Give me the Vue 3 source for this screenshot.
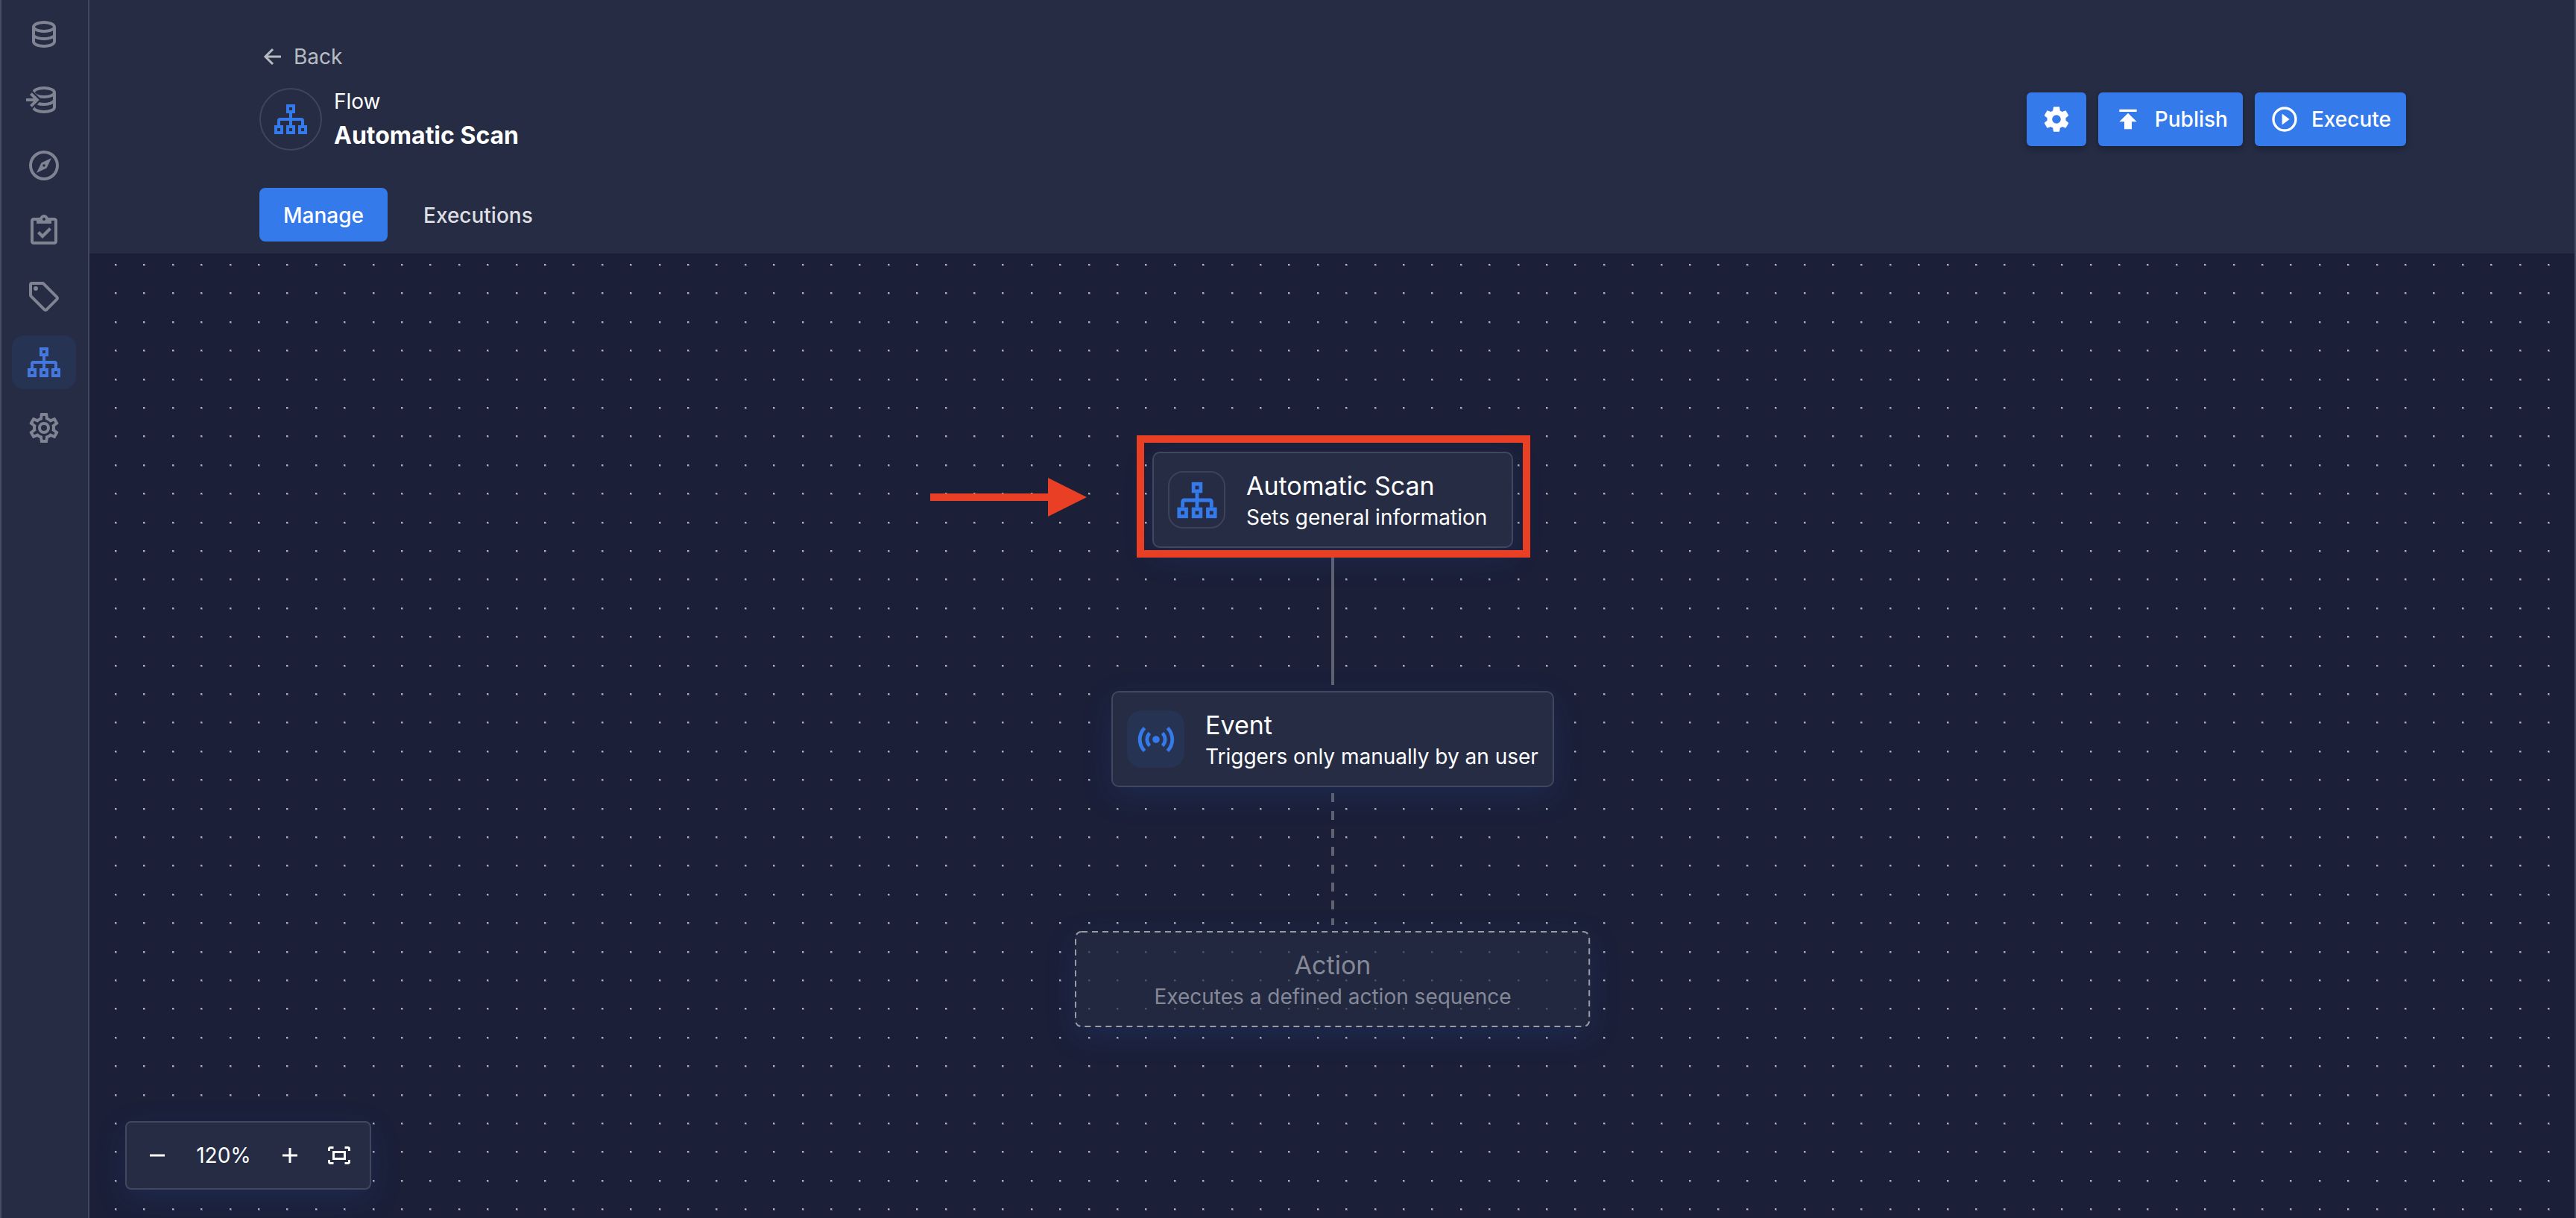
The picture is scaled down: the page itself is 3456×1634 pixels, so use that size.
<script setup>
const cogOutline =
  'M12,8A4,4 0 0,1 16,12A4,4 0 0,1 12,16A4,4 0 0,1 8,12A4,4 0 0,1 12,8M12,10A2,2 0 0,0 10,12A2,2 0 0,0 12,14A2,2 0 0,0 14,12A2,2 0 0,0 12,10M10,22C9.75,22 9.54,21.82 9.5,21.58L9.13,18.93C8.5,18.68 7.96,18.34 7.44,17.94L4.95,18.95C4.73,19.03 4.46,18.95 4.34,18.73L2.34,15.27C2.21,15.05 2.27,14.78 2.46,14.63L4.57,12.97L4.5,12L4.57,11L2.46,9.37C2.27,9.22 2.21,8.95 2.34,8.73L4.34,5.27C4.46,5.05 4.73,4.96 4.95,5.05L7.44,6.05C7.96,5.66 8.5,5.32 9.13,5.07L9.5,2.42C9.54,2.18 9.75,2 10,2H14C14.25,2 14.46,2.18 14.5,2.42L14.87,5.07C15.5,5.32 16.04,5.66 16.56,6.05L19.05,5.05C19.27,4.96 19.54,5.05 19.66,5.27L21.66,8.73C21.79,8.95 21.73,9.22 21.54,9.37L19.43,11L19.5,12L19.43,13L21.54,14.63C21.73,14.78 21.79,15.05 21.66,15.27L19.66,18.73C19.54,18.95 19.27,19.04 19.05,18.95L16.56,17.95C16.04,18.34 15.5,18.68 14.87,18.93L14.5,21.58C14.46,21.82 14.25,22 14,22H10M11.25,4L10.88,6.61C9.68,6.86 8.62,7.5 7.85,8.39L5.44,7.35L4.69,8.65L6.8,10.2C6.4,11.37 6.4,12.64 6.8,13.8L4.68,15.36L5.43,16.66L7.86,15.62C8.63,16.5 9.68,17.14 10.87,17.38L11.24,20H12.76L13.13,17.39C14.32,17.14 15.37,16.5 16.14,15.62L18.57,16.66L19.32,15.36L17.2,13.81C17.6,12.64 17.6,11.37 17.2,10.2L19.31,8.65L18.56,7.35L16.15,8.39C15.38,7.5 14.32,6.86 13.12,6.62L12.75,4H11.25Z'

const navItems = [
  {
    id: 'data',
    label: 'Data',
    path: 'M12 3C7.58 3 4 4.79 4 7V17C4 19.21 7.59 21 12 21S20 19.21 20 17V7C20 4.79 16.42 3 12 3M18 17C18 17.5 15.87 19 12 19S6 17.5 6 17V14.77C7.61 15.55 9.72 16 12 16S16.39 15.55 18 14.77V17M18 12.45C16.7 13.4 14.42 14 12 14C9.58 14 7.3 13.4 6 12.45V9.64C7.47 10.47 9.61 11 12 11C14.39 11 16.53 10.47 18 9.64V12.45M12 9C8.13 9 6 7.5 6 7S8.13 5 12 5C15.87 5 18 6.5 18 7S15.87 9 12 9Z',
  },
  { id: 'import', label: 'Import' },
  {
    id: 'explore',
    label: 'Explore',
    path: 'M7,17L10.2,10.2L17,7L13.8,13.8L7,17M12,11.1A0.9,0.9 0 0,0 11.1,12A0.9,0.9 0 0,0 12,12.9A0.9,0.9 0 0,0 12.9,12A0.9,0.9 0 0,0 12,11.1M12,2A10,10 0 0,1 22,12A10,10 0 0,1 12,22A10,10 0 0,1 2,12A10,10 0 0,1 12,2M12,4A8,8 0 0,0 4,12A8,8 0 0,0 12,20A8,8 0 0,0 20,12A8,8 0 0,0 12,4Z',
  },
  {
    id: 'tasks',
    label: 'Tasks',
    path: 'M19 3H14.82C14.4 1.84 13.3 1 12 1S9.6 1.84 9.18 3H5C3.9 3 3 3.9 3 5V19C3 20.1 3.9 21 5 21H19C20.1 21 21 20.1 21 19V5C21 3.9 20.1 3 19 3M12 3C12.55 3 13 3.45 13 4S12.55 5 12 5 11 4.55 11 4 11.45 3 12 3M7 7H17V5H19V19H5V5H7V7M7.5 13.5L9 12L11 14L15.5 9.5L17 11L11 17L7.5 13.5Z',
  },
  {
    id: 'tags',
    label: 'Tags',
    path: 'M21.41 11.58L12.41 2.58A2 2 0 0 0 11 2H4A2 2 0 0 0 2 4V11A2 2 0 0 0 2.59 12.42L11.59 21.42A2 2 0 0 0 13 22A2 2 0 0 0 14.41 21.41L21.41 14.41A2 2 0 0 0 22 13A2 2 0 0 0 21.41 11.58M13 20L4 11V4H11L20 13M6.5 5A1.5 1.5 0 1 1 5 6.5A1.5 1.5 0 0 1 6.5 5Z',
  },
  { id: 'flows', label: 'Flows', active: true },
  { id: 'settings', label: 'Settings', path: cogOutline },
]

// Five grid steps of the 120% zoom level fill one tile.
const steps = [0, 38, 77, 115, 154]
const dots = steps.flatMap((y) => steps.map((x) => ({ x, y })))
</script>

<template>
  <div class="app">
    <svg class="sprite" aria-hidden="true">
      <symbol id="sitemap" viewBox="0 0 24 24">
        <g fill="none" stroke="currentColor" stroke-width="2">
          <rect x="10" y="3" width="4" height="4" />
          <rect x="2" y="17" width="4" height="4" />
          <rect x="10" y="17" width="4" height="4" />
          <rect x="18" y="17" width="4" height="4" />
          <path d="M12 8V16M4 16V13Q4 12 5 12H19Q20 12 20 13V16" />
        </g>
      </symbol>
    </svg>

    <nav class="sidebar" aria-label="Main">
      <a
        v-for="item in navItems"
        :key="item.id"
        href="#"
        class="nav-item"
        :class="{ active: item.active }"
        :aria-label="item.label"
      >
        <svg v-if="item.path" class="icon" viewBox="0 0 24 24"><path :d="item.path" fill="currentColor" /></svg>
        <svg v-else-if="item.id === 'flows'" class="icon"><use href="#sitemap" /></svg>
        <svg v-else class="icon" viewBox="0 0 24 24">
          <mask id="import-cut">
            <rect width="24" height="24" fill="#fff" />
            <path d="M3.6 5.1L10.5 12L3.6 18.9H0V5.1Z" fill="#000" />
          </mask>
          <g fill="none" stroke="currentColor" stroke-width="2" mask="url(#import-cut)">
            <ellipse cx="12" cy="7" rx="7" ry="3" />
            <path d="M5 7V17C5 18.6 8 20 12 20S19 18.6 19 17V7M5 12C6 14 9 15 12 15S18 14 19 12.3" />
          </g>
          <path d="M3.92 7.08L2.5 8.5L5 11H0V13H5L2.5 15.5L3.92 16.92L8.84 12Z" fill="currentColor" />
        </svg>
      </a>
    </nav>

    <div class="main">
      <header class="header">
        <div class="header-inner">
          <a href="#" class="back">
            <svg class="icon-small" viewBox="0 0 36 36">
              <path d="M29 18H8M18 8L8 18L18 28" fill="none" stroke="currentColor" stroke-width="3" />
            </svg>
            <span>Back</span>
          </a>
          <div class="title-row">
            <div class="avatar"><svg class="icon"><use href="#sitemap" /></svg></div>
            <div class="title-text">
              <p class="kind">Flow</p>
              <h1>Automatic Scan</h1>
            </div>
            <div class="actions">
              <button type="button" class="btn" aria-label="Settings">
                <svg class="icon-medium" viewBox="0 0 24 24">
                  <path
                    fill="currentColor"
                    d="M12,15.5A3.5,3.5 0 0,1 8.5,12A3.5,3.5 0 0,1 12,8.5A3.5,3.5 0 0,1 15.5,12A3.5,3.5 0 0,1 12,15.5M19.43,12.97C19.47,12.65 19.5,12.33 19.5,12C19.5,11.67 19.47,11.34 19.43,11L21.54,9.37C21.73,9.22 21.78,8.95 21.66,8.73L19.66,5.27C19.54,5.05 19.27,4.96 19.05,5.05L16.56,6.05C16.04,5.66 15.5,5.32 14.87,5.07L14.5,2.42C14.46,2.18 14.25,2 14,2H10C9.75,2 9.54,2.18 9.5,2.42L9.13,5.07C8.5,5.32 7.96,5.66 7.44,6.05L4.95,5.05C4.73,4.96 4.46,5.05 4.34,5.27L2.34,8.73C2.21,8.95 2.27,9.22 2.46,9.37L4.57,11C4.53,11.34 4.5,11.67 4.5,12C4.5,12.33 4.53,12.65 4.57,12.97L2.46,14.63C2.27,14.78 2.21,15.05 2.34,15.27L4.34,18.73C4.46,18.95 4.73,19.03 4.95,18.95L7.44,17.94C7.96,18.34 8.5,18.68 9.13,18.93L9.5,21.58C9.54,21.82 9.75,22 10,22H14C14.25,22 14.46,21.82 14.5,21.58L14.87,18.93C15.5,18.67 16.04,18.34 16.56,17.94L19.05,18.95C19.27,19.03 19.54,18.95 19.66,18.73L21.66,15.27C21.78,15.05 21.73,14.78 21.54,14.63L19.43,12.97Z"
                  />
                </svg>
              </button>
              <button type="button" class="btn">
                <svg class="icon-medium" viewBox="0 0 24 24">
                  <path fill="currentColor" d="M5,4V6H19V4H5M5,14H9V20H15V14H19L12,7L5,14Z" />
                </svg>
                Publish
              </button>
              <button type="button" class="btn">
                <svg class="icon-medium" viewBox="0 0 24 24">
                  <circle cx="12" cy="12" r="9" fill="none" stroke="currentColor" stroke-width="2" />
                  <path fill="currentColor" d="M10,7.5V16.5L16,12Z" />
                </svg>
                Execute
              </button>
            </div>
          </div>
          <div class="tabs" role="tablist">
            <button type="button" role="tab" aria-selected="true" class="tab selected">Manage</button>
            <button type="button" role="tab" aria-selected="false" class="tab">Executions</button>
          </div>
        </div>
      </header>

      <main class="canvas">
        <svg class="grid" aria-hidden="true">
          <pattern id="dots" x="34" y="14" width="192" height="192" patternUnits="userSpaceOnUse">
            <template v-for="d in dots" :key="`${d.x}-${d.y}`">
              <rect :x="d.x" :y="d.y" width="3" height="3" fill="#55586a" />
              <rect :x="d.x" :y="d.y" width="2" height="2" fill="#b3b3b7" />
            </template>
          </pattern>
          <rect width="100%" height="100%" fill="url(#dots)" />
        </svg>

        <div class="flow">
          <section class="node general">
            <div class="node-icon outlined"><svg class="icon-large"><use href="#sitemap" /></svg></div>
            <div class="node-text">
              <h2>Automatic Scan</h2>
              <p>Sets general information</p>
            </div>
            <div class="highlight"></div>
            <svg class="pointer" viewBox="0 0 210 52" aria-hidden="true">
              <path d="M0 21H158V0L210 26L158 52V31H0Z" fill="#e94025" />
            </svg>
          </section>
          <div class="connector"></div>
          <section class="node event">
            <div class="node-icon filled">
              <svg class="icon-large" viewBox="0 0 24 24">
                <path
                  fill="currentColor"
                  d="M4.93,4.93C3.12,6.74 2,9.24 2,12C2,14.76 3.12,17.26 4.93,19.07L6.34,17.66C4.89,16.22 4,14.22 4,12C4,9.79 4.89,7.78 6.34,6.34L4.93,4.93M19.07,4.93L17.66,6.34C19.11,7.79 20,9.79 20,12C20,14.22 19.11,16.22 17.66,17.66L19.07,19.07C20.88,17.26 22,14.76 22,12C22,9.24 20.88,6.74 19.07,4.93M7.76,7.76C6.67,8.85 6,10.35 6,12C6,13.65 6.67,15.15 7.76,16.24L9.17,14.83C8.45,14.11 8,13.11 8,12C8,10.89 8.45,9.89 9.17,9.17L7.76,7.76M16.24,7.76L14.83,9.17C15.55,9.89 16,10.89 16,12C16,13.11 15.55,14.11 14.83,14.83L16.24,16.24C17.33,15.15 18,13.65 18,12C18,10.35 17.33,8.85 16.24,7.76M12,10A2,2 0 0,0 10,12A2,2 0 0,0 12,14A2,2 0 0,0 14,12A2,2 0 0,0 12,10Z"
                />
              </svg>
            </div>
            <div class="node-text">
              <h2>Event</h2>
              <p>Triggers only manually by an user</p>
            </div>
          </section>
          <div class="connector dashed"></div>
          <section class="node placeholder">
            <svg class="outline" aria-hidden="true"><rect x="1" y="1" rx="8" /></svg>
            <div class="node-text">
              <h2>Action</h2>
              <p>Executes a defined action sequence</p>
            </div>
          </section>
        </div>

        <div class="zoom">
          <button type="button" aria-label="Zoom out">
            <svg class="icon-small" viewBox="0 0 36 36"><path d="M8 18H28" stroke="currentColor" stroke-width="3" /></svg>
          </button>
          <span class="level">120%</span>
          <button type="button" aria-label="Zoom in">
            <svg class="icon-small" viewBox="0 0 36 36">
              <path d="M8 18H28M18 8V28" stroke="currentColor" stroke-width="3" />
            </svg>
          </button>
          <button type="button" class="fit" aria-label="Fit to screen">
            <svg class="icon-small" viewBox="0 0 24 24">
              <path
                fill="currentColor"
                d="M17 4H20C21.1 4 22 4.9 22 6V8H20V6H17V4M4 8V6H7V4H4C2.9 4 2 4.9 2 6V8H4M20 16V18H17V20H20C21.1 20 22 19.1 22 18V16H20M7 18H4V16H2V18C2 19.1 2.9 20 4 20H7V18M16 10V14H8V10H16M18 8H6V16H18V8Z"
              />
            </svg>
          </button>
        </div>
      </main>
    </div>
  </div>
</template>

<style>
body {
  margin: 0;
  background: #1b1f38;
}
</style>

<style scoped>
.app {
  position: relative;
  display: flex;
  min-height: 100vh;
  font-family: Inter, "Liberation Sans", sans-serif;
  font-size: 28px;
  line-height: 40px;
  color: #fff;
  background: #1b1f38;
}

.app::after {
  content: "";
  position: absolute;
  top: 0;
  right: 0;
  bottom: 0;
  width: 2px;
  background: #474d61;
}

.app *,
.app *::after {
  box-sizing: border-box;
}

h1,
h2,
p {
  margin: 0;
}

button {
  font: inherit;
  color: inherit;
  border: 0;
  background: none;
  padding: 0;
  cursor: pointer;
}

a {
  color: inherit;
  text-decoration: none;
}

svg {
  display: block;
  flex: none;
}

.sprite {
  position: absolute;
  width: 0;
  height: 0;
}

.icon {
  width: 48px;
  height: 48px;
}

.icon-small {
  width: 36px;
  height: 36px;
}

.icon-medium {
  width: 40px;
  height: 40px;
}

.icon-large {
  width: 58px;
  height: 58px;
}

.sidebar {
  flex: none;
  width: 120px;
  padding: 10px 16px 10px 14px;
  display: flex;
  flex-direction: column;
  gap: 16px;
  background: #252c44;
  border-left: 2px solid #474d61;
  border-right: 2px solid #41475c;
}

.nav-item {
  height: 72px;
  display: flex;
  align-items: center;
  justify-content: center;
  border-radius: 16px;
  color: #7f8392;
}

.nav-item.active {
  background: #273352;
  color: #4478de;
}

.main {
  flex: 1;
  min-width: 0;
  display: flex;
  flex-direction: column;
}

.header {
  background: #252c44;
  padding: 56px 48px 16px;
}

.header-inner {
  max-width: 2880px;
  margin: 0 auto;
}

.back {
  display: inline-flex;
  align-items: center;
  gap: 10px;
  vertical-align: top;
  color: #b9bbc3;
}

.title-row {
  display: flex;
  align-items: center;
  gap: 16px;
  height: 88px;
  margin-top: 20px;
}

.title-text {
  display: flex;
  flex-direction: column;
  gap: 2px;
  padding-top: 2px;
}

.avatar {
  width: 84px;
  height: 84px;
  display: flex;
  align-items: center;
  justify-content: center;
  border: 2px solid #3f455a;
  border-radius: 50%;
  color: #347aeb;
}

h1 {
  font-size: 32px;
  line-height: 48px;
  font-weight: 700;
}

.actions {
  display: flex;
  gap: 16px;
  margin-left: auto;
}

.btn {
  height: 72px;
  padding: 0 20px;
  display: flex;
  align-items: center;
  gap: 16px;
  border-radius: 6px;
  font-weight: 500;
  background: #347aeb;
  box-shadow: 0 4px 8px rgba(0, 0, 0, 0.25);
}

.tabs {
  display: flex;
  gap: 16px;
  margin-top: 48px;
}

.tab {
  height: 72px;
  padding: 2px 32px 0;
  border-radius: 8px;
  font-weight: 500;
  color: #dddee2;
}

.tab.selected {
  background: #347aeb;
  color: #fff;
}

.canvas {
  position: relative;
  flex: 1;
  padding: 266px 0 254px;
  overflow: hidden;
}

.grid {
  position: absolute;
  inset: 0;
  width: 100%;
  height: 100%;
}

.flow {
  position: relative;
  display: flex;
  flex-direction: column;
  align-items: center;
}

.node {
  position: relative;
  min-height: 129px;
  padding: 0 16px 0 19px;
  display: flex;
  align-items: center;
  gap: 28px;
  white-space: nowrap;
  background: #252c44;
  border: 2px solid #41475c;
  border-radius: 10px;
  box-shadow: 0 12px 40px rgba(38, 84, 168, 0.2);
}

.node.general {
  width: 484px;
}

.node.event {
  width: 594px;
}

.node-text {
  padding-top: 2px;
}

h2 {
  font-size: 34px;
  line-height: 44px;
  font-weight: 400;
}

.node-icon {
  flex: none;
  width: 77px;
  height: 77px;
  display: flex;
  align-items: center;
  justify-content: center;
  border-radius: 20px;
  color: #347aeb;
}

.node-icon.outlined {
  border: 2px solid #3c4258;
}

.node-icon.filled {
  background: #273352;
}

.highlight {
  position: absolute;
  inset: -24px -25px -15px -23px;
  border: 10px solid #e94025;
}

.pointer {
  position: absolute;
  right: calc(100% + 90px);
  top: 33px;
  width: 210px;
  height: 52px;
}

.connector {
  width: 4px;
  height: 176px;
  margin: 8px 0;
  background: #5f6371;
}

.connector.dashed {
  height: 177px;
  background: repeating-linear-gradient(#5f6371 0 12px, transparent 12px 24px);
}

.node.placeholder {
  padding: 0 104px;
  justify-content: center;
  text-align: center;
  background: rgba(37, 44, 68, 0.7);
  border-color: transparent;
  color: #858997;
}

.outline {
  position: absolute;
  inset: -2px;
  width: calc(100% + 4px);
  height: calc(100% + 4px);
}

.outline rect {
  width: calc(100% - 2px);
  height: calc(100% - 2px);
  fill: none;
  stroke: #9a9ca4;
  stroke-width: 2px;
  stroke-dasharray: 8 6;
}

.zoom {
  position: absolute;
  left: 48px;
  bottom: 38px;
  height: 92px;
  padding: 0 23px;
  display: flex;
  align-items: center;
  background: #252c44;
  border: 2px solid #41475c;
  border-radius: 8px;
  box-shadow: 0 12px 40px rgba(38, 84, 168, 0.2);
}

.level {
  width: 142px;
  text-align: center;
}

.fit {
  margin-left: 30px;
}
</style>
